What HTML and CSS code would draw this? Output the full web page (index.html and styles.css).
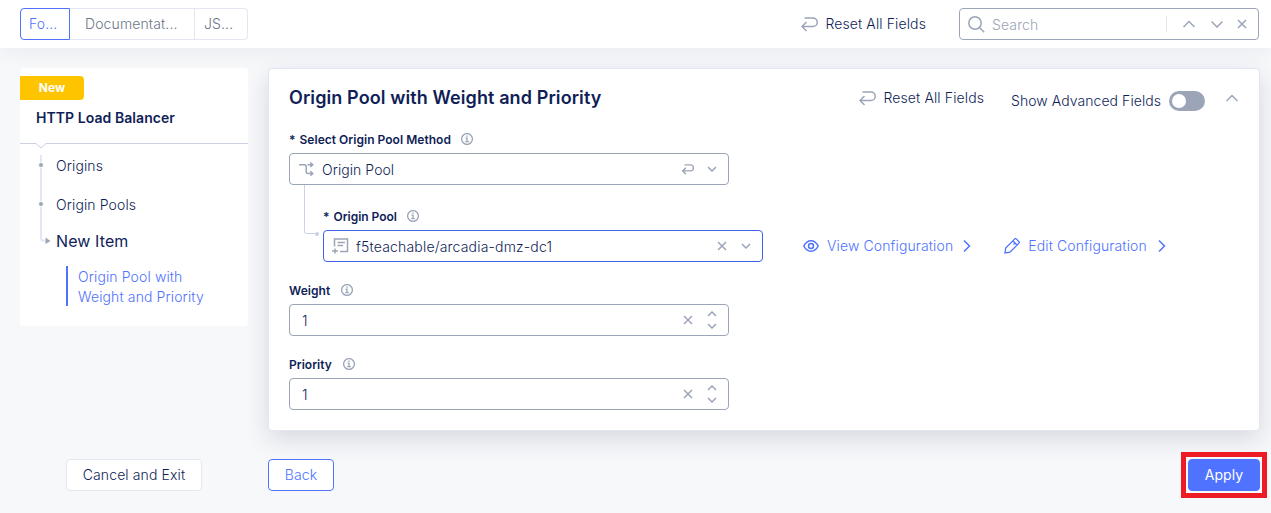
FILE: index.html
```html
<!DOCTYPE html>
<html lang="en">
<head>
<meta charset="utf-8">
<title>HTTP Load Balancer</title>
<link rel="stylesheet" href="styles.css">
</head>
<body>
<svg class="defs" width="0" height="0">
  <symbol id="reset" viewBox="0 0 17 15"><path d="M3.500 1H12a4 4 0 0 1 0 8.500H1.200M5.500 5 1 9.500 5.500 14"/></symbol>
  <symbol id="x" viewBox="0 0 10 10"><path d="M1 1l8 8M9 1 1 9"/></symbol>
  <symbol id="down" viewBox="0 0 10 6"><path d="M1 1l4 4 4-4"/></symbol>
  <symbol id="up" viewBox="0 0 10 6"><path d="M1 5l4-4 4 4"/></symbol>
  <symbol id="wide-down" viewBox="0 0 12 8"><path d="M.5 1.500 6 7l5.500-5.500"/></symbol>
  <symbol id="wide-up" viewBox="0 0 12 8"><path d="M.5 7 6 1.500 11.500 7"/></symbol>
  <symbol id="right" viewBox="0 0 8 14"><path d="M1 1.500 6.500 7 1 12.500"/></symbol>
  <symbol id="info" viewBox="0 0 12 12"><circle cx="6" cy="6" r="5.400"/><path d="M4.500 5.200H6V8.700M4.200 8.700h3.600M5.300 3.100h1.400"/></symbol>
</svg>

<header class="topbar">
  <nav class="tabs">
    <a class="tab tab-form">Fo...</a><a class="tab tab-docs">Documentat...</a><a class="tab tab-json">JS...</a>
  </nav>
  <div class="reset top-reset"><svg class="icon i-reset"><use href="#reset"/></svg><span>Reset All Fields</span></div>
  <div class="search">
    <svg class="icon i-search" viewBox="0 0 17 17"><circle cx="7" cy="7" r="6.200"/><path d="M11.500 11.500 16.200 16.200"/></svg>
    <span class="placeholder">Search</span>
    <span class="search-line"></span>
    <svg class="icon i-nav"><use href="#wide-up"/></svg>
    <svg class="icon i-nav"><use href="#wide-down"/></svg>
    <svg class="icon i-close"><use href="#x"/></svg>
  </div>
</header>

<main class="layout">
  <aside class="sidebar">
    <span class="badge">New</span>
    <h2 class="side-title">HTTP Load Balancer</h2>
    <svg class="divider" viewBox="0 0 228 8"><path d="M0 1.500H16l5 4.500 5-4.500H228"/></svg>
    <div class="tree">
      <svg class="rail" viewBox="0 0 12 94"><path class="rail-line" d="M3 0V83.500a2 2 0 0 0 2 2H7"/><circle class="knot" cx="3" cy="10" r="2.500"/><circle class="knot" cx="3" cy="49" r="2.500"/><path class="arrow" d="M7.500 82.500 12.500 86 7.500 89z"/></svg>
      <div class="nodes">
        <a class="node">Origins</a>
        <a class="node">Origin Pools</a>
        <a class="node node-new">New Item</a>
      </div>
    </div>
    <a class="current"><span>Origin Pool with</span><span>Weight and Priority</span></a>
  </aside>

  <section class="panel">
    <div class="panel-head">
      <h1 class="panel-title">Origin Pool with Weight and Priority</h1>
      <div class="reset panel-reset"><svg class="icon i-reset"><use href="#reset"/></svg><span>Reset All Fields</span></div>
      <div class="advanced"><span>Show Advanced Fields</span><span class="toggle"><span class="thumb"></span></span></div>
      <svg class="icon i-nav"><use href="#wide-up"/></svg>
    </div>

    <div class="label"><span class="star">*</span><span>Select Origin Pool Method</span><svg class="icon i-info"><use href="#info"/></svg></div>
    <div class="field">
      <svg class="icon i-branch" viewBox="0 0 16 15"><path d="M0 2.700H5.500Q7.200 2.700 7.200 4.500V9.500Q7.200 11.500 9 11.500H13.500M8.500 2.700h5M11.300.5 13.800 2.700 11.300 4.900M11.300 9.300 13.800 11.500 11.300 13.700"/></svg>
      <span class="value">Origin Pool</span>
      <svg class="icon i-undo"><use href="#reset"/></svg>
      <svg class="icon i-down"><use href="#down"/></svg>
    </div>

    <div class="nested">
      <svg class="elbow" viewBox="0 0 15 52"><path d="M.5 0V46.500a2 2 0 0 0 2 2H11"/><circle cx="13" cy="49" r="2"/></svg>
      <div class="nested-body">
        <div class="label"><span class="star">*</span><span class="pool-label">Origin Pool</span><svg class="icon i-info"><use href="#info"/></svg></div>
        <div class="nested-row">
          <div class="field field-active">
            <svg class="icon i-list" viewBox="0 0 17 16"><path d="M2.500 8.500V1h13v12.500H8M5.500 4.500h7.500M5.500 7.500h5.500M0 13h6M3 10.500v5"/></svg>
            <span class="value value-pool">f5teachable/arcadia-dmz-dc1</span>
            <svg class="icon i-close"><use href="#x"/></svg>
            <svg class="icon i-down"><use href="#down"/></svg>
          </div>
          <a class="action view"><svg class="icon i-eye" viewBox="0 0 16 12"><path d="M.8 6Q3.500.8 8 .8T15.200 6Q12.500 11.200 8 11.200T.8 6z"/><circle cx="8" cy="6" r="2.500"/></svg><span>View Configuration</span><svg class="icon i-right"><use href="#right"/></svg></a>
          <a class="action edit"><svg class="icon i-pencil" viewBox="0 0 16 16"><path d="M1 15l.7-5L10.800.9a1 1 0 0 1 1.400 0L15 3.700a1 1 0 0 1 0 1.400L6 14.200zM9 3l4 4M11 5l-1.500 1.500"/></svg><span>Edit Configuration</span><svg class="icon i-right"><use href="#right"/></svg></a>
        </div>
      </div>
    </div>

    <div class="label number-label"><span>Weight</span><svg class="icon i-info"><use href="#info"/></svg></div>
    <div class="field">
      <span class="value number">1</span>
      <svg class="icon i-close"><use href="#x"/></svg>
      <span class="spin"><svg class="icon i-down"><use href="#up"/></svg><svg class="icon i-down"><use href="#down"/></svg></span>
    </div>
    <div class="label number-label"><span>Priority</span><svg class="icon i-info"><use href="#info"/></svg></div>
    <div class="field">
      <span class="value number">1</span>
      <svg class="icon i-close"><use href="#x"/></svg>
      <span class="spin"><svg class="icon i-down"><use href="#up"/></svg><svg class="icon i-down"><use href="#down"/></svg></span>
    </div>
  </section>
</main>

<footer class="footer">
  <button class="btn cancel">Cancel and Exit</button>
  <button class="btn back">Back</button>
  <div class="highlight"><button class="btn apply">Apply</button></div>
</footer>
</body>
</html>
```
FILE: styles.css
```css
* { box-sizing: border-box; }
body {
  margin: 0;
  height: 513px;
  overflow: hidden;
  background: #f7f8fa;
  color: #0f1e57;
  font: 300 14px/20px Inter, "Liberation Sans", sans-serif;
  letter-spacing: 0.12px;
  white-space: nowrap;
}
.defs { display: block; height: 0; }
.icon { display: block; flex: none; fill: none; stroke: #9ba5b7; stroke-width: 1.5; overflow: visible; }
.i-reset { width: 17px; height: 15px; }
.i-nav { width: 12px; height: 8px; }
.i-close { width: 10px; height: 10px; }
.i-down { width: 10px; height: 6px; }
.i-info { width: 12px; height: 12px; stroke-width: 1.3; }

.topbar {
  display: flex;
  align-items: center;
  height: 48px;
  padding: 0 12px 0 20px;
  background: #fff;
  box-shadow: 0 4px 20px rgba(30, 40, 70, 0.06);
}
.tabs { display: flex; width: 228px; }
.tab { height: 32px; padding-left: 15px; border: 1px solid #e4e6f2; border-left: 0; line-height: 30px; color: #6b7588; }
.tab-form { width: 50px; padding-left: 8px; border: 1px solid #4f73ff; border-radius: 4px 0 0 4px; color: #4f73ff; }
.tab-docs { width: 125px; }
.tab-json { width: 53px; padding-left: 9px; border-radius: 0 4px 4px 0; }
.reset { display: flex; align-items: center; gap: 7px; }
.top-reset { margin-left: auto; margin-right: 33px; }
.search { display: flex; align-items: center; width: 300px; height: 32px; padding: 0 11px 0 8px; border: 1px solid #9ba5b7; border-radius: 4px; }
.i-search { width: 17px; height: 17px; }
.placeholder { margin: 2px auto 0 7px; color: #9ba5b7; }
.search-line { width: 1px; height: 16px; margin-right: 16px; background: #e4e6f2; }
.search .i-nav { margin-right: 16px; }
.search .i-nav + .i-close { margin-left: -2px; }

.layout { display: grid; grid-template-columns: 228px 992px; gap: 20px; align-items: start; padding: 20px 0 0 20px; }
.sidebar { height: 258px; padding-top: 8px; border-radius: 4px; background: #fff; }
.badge { display: block; width: 64px; height: 24px; border-radius: 0 4px 4px 0; background: #ffc400; color: #fff; font-size: 12px; font-weight: 700; line-height: 24px; text-align: center; letter-spacing: 0; }
.side-title { margin: 8px 0 15px 16px; font-size: 14px; font-weight: 600; line-height: 20px; letter-spacing: 0.06px; }
.divider { display: block; width: 228px; height: 8px; margin-top: -1px; fill: none; stroke: #ccd1e3; }
.tree { display: flex; gap: 6px; padding: 5px 0 0 18px; }
.rail { width: 12px; height: 94px; overflow: visible; }
.rail-line { fill: none; stroke: #e4e6f5; stroke-width: 2; }
.knot { fill: #9ba5b7; stroke: #fff; stroke-width: 1; }
.arrow { fill: #9ba5b7; }
.nodes { display: flex; flex-direction: column; }
.node { height: 39px; line-height: 21px; }
.node-new { height: 36px; font-size: 16px; font-weight: 400; line-height: 17px; letter-spacing: 0.1px; }
.current { display: flex; flex-direction: column; margin: -3px 0 0 46px; padding-left: 10px; border-left: 2px solid #4f73ff; color: #4f73ff; line-height: 20px; }
.current span { padding-top: 1px; height: 20px; }

.panel { height: 363px; padding: 0 21px 0 20px; border: 1px solid #e4e6f2; border-radius: 4px; background: #fff; box-shadow: 0 8px 24px rgba(15, 30, 70, 0.14); }
.panel-head { display: flex; align-items: center; height: 61px; padding-bottom: 3px; }
.panel-title { margin: 0; font-size: 18px; font-weight: 600; letter-spacing: 0.1px; }
.panel-reset { margin-left: auto; margin-right: 27px; }
.advanced { display: flex; align-items: center; gap: 8px; margin: 6px 21px 0 0; letter-spacing: 0.06px; }
.toggle { display: flex; align-items: center; width: 36px; height: 20px; padding-left: 3px; border-radius: 10px; background: #9ba5b7; }
.thumb { width: 14px; height: 14px; border-radius: 50%; background: #fff; }

.label { display: flex; align-items: center; height: 20px; margin-bottom: 3px; font-size: 12px; font-weight: 600; letter-spacing: 0.03px; }
.star { margin-right: 4px; }
.pool-label { letter-spacing: -0.03px; }
.i-info { margin: -2px 0 0 10px; }
.number-label .i-info { margin-left: 11px; }
.field { display: flex; align-items: center; width: 440px; height: 32px; padding: 0 11px 0 9px; border: 1px solid #9ba5b7; border-radius: 4px; }
.field-active { border-color: #4063e8; padding-left: 8px; }
.value { margin: 2px auto 0 7px; letter-spacing: 0.06px; }
.value-pool { letter-spacing: 0.18px; }
.i-branch { width: 16px; height: 15px; }
.i-list { width: 17px; height: 16px; }
.i-undo { width: 12px; height: 11px; margin-right: 13px; stroke-width: 2; }
.field .i-close { margin-right: 14px; }
.spin { display: flex; flex-direction: column; gap: 6px; }
.value.number { margin-left: 3px; }
.nested { display: flex; gap: 4px; padding-left: 15px; }
.elbow { width: 15px; height: 52px; fill: none; stroke: #ccd1e3; }
.elbow circle { fill: #ccd1e3; stroke: none; }
.nested-body { padding-top: 22px; }
.nested-row { display: flex; align-items: center; }
.action { display: flex; align-items: center; color: #4f73ff; }
.action .icon { stroke: #4f73ff; }
.view { margin-left: 40px; }
.edit { margin-left: 33px; }
.i-eye { width: 16px; height: 12px; margin-right: 8px; }
.i-pencil { width: 16px; height: 16px; margin-right: 8px; stroke-width: 1.3; }
.i-right { width: 8px; height: 14px; margin-left: 10px; }
.edit .i-right { margin-left: 11px; }
.number-label { margin-top: 19px; }

.footer { display: flex; align-items: center; padding: 21px 4px 0 66px; }
.btn { height: 32px; padding: 0; border: 1px solid #e4e6f2; border-radius: 4px; background: #fff; color: inherit; font: inherit; letter-spacing: inherit; }
.cancel { width: 136px; }
.back { width: 66px; margin-left: 66px; border-color: #4f73ff; color: #4f73ff; }
.highlight { margin-left: auto; padding: 2px; border: 5px solid #ed1c24; }
.apply { display: block; width: 72px; border-color: #4f73ff; background: #4f73ff; color: #fff; font-weight: 400; }
```
